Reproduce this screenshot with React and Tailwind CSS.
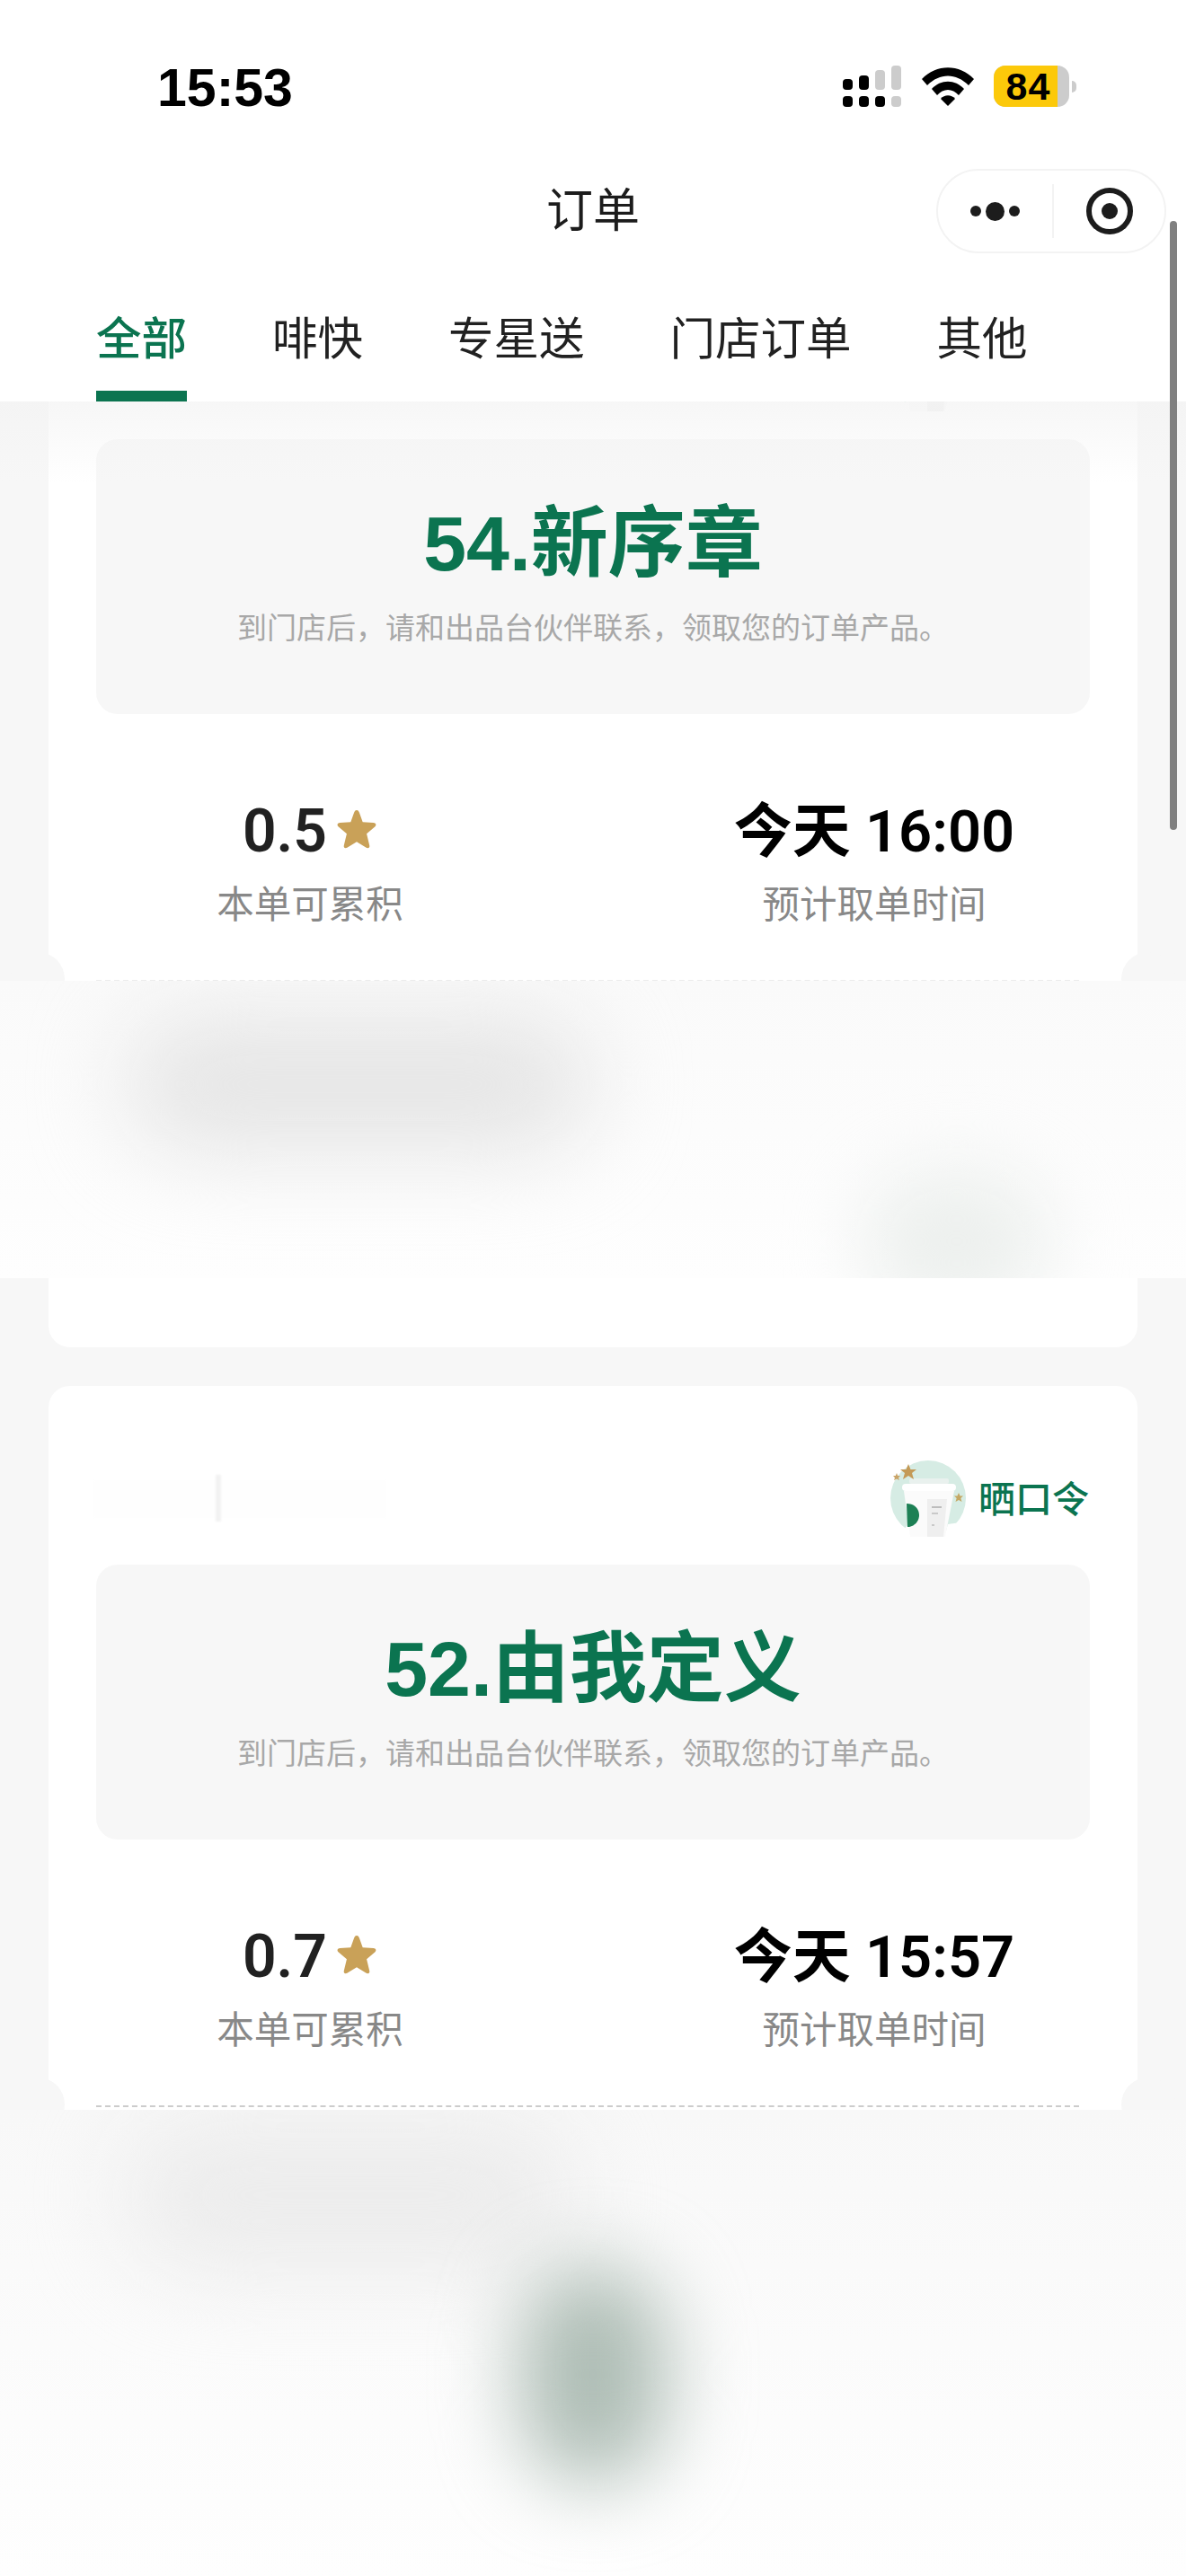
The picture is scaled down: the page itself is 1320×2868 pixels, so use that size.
const tabs = ['全部', '啡快', '专星送', '门店订单', '其他']
const cjk = "font-['Liberation_Sans','Noto_Sans_CJK_SC',sans-serif]"
const num = "font-['Roboto','Noto_Sans_CJK_SC',sans-serif]"
const pickupHint = '到门店后\uFF0C请和出品台伙伴联系\uFF0C领取您的订单产品。'

function StatusBar() {
  return (
    <div className="flex h-[188px] items-start pl-[175px] pt-[68px]">
      <span className="font-['Liberation_Sans',sans-serif] text-[59px] leading-[60px] font-bold text-black">15:53</span>
      <div className="ml-auto flex items-start pr-[122px] pt-[5px]">
        <svg width="66" height="46" viewBox="0 0 66 46" className="mr-[22px]">
          <rect x="0" y="15" width="11" height="12" rx="4" fill="#000" />
          <rect x="18" y="11" width="11" height="16" rx="4" fill="#000" />
          <rect x="36" y="5" width="11" height="22" rx="4" fill="#ccc" />
          <rect x="54" y="0" width="11" height="27" rx="4" fill="#ccc" />
          <rect x="0" y="34" width="11" height="12" rx="4" fill="#000" />
          <rect x="18" y="34" width="11" height="12" rx="4" fill="#000" />
          <rect x="36" y="34" width="11" height="12" rx="4" fill="#000" />
          <rect x="54" y="34" width="11" height="12" rx="4" fill="#ccc" />
        </svg>
        <svg width="58" height="44" viewBox="0 0 58 44" className="mr-[22px] mt-[2px]">
          <path d="M0 13 C16 -4 42 -4 58 13 L52 20 C38 6 20 6 6 20 Z" fill="#000" />
          <path d="M11 24 C21 13 37 13 47 24 L41 31 C34 23 24 23 17 31 Z" fill="#000" />
          <path d="M21 35 C25 30 33 30 37 35 L29 43 Z" fill="#000" />
        </svg>
        <div className="relative flex h-[46px] w-[84px] overflow-hidden rounded-[13px] bg-[#cccccc]">
          <div className="flex w-[71px] items-center justify-center bg-[#fcc90a] pl-[6px] font-['Liberation_Sans',sans-serif] text-[43px] leading-[46px] font-bold tracking-[1px] text-black">84</div>
        </div>
        <div className="ml-[3px] mt-[17px] h-[13px] w-[5px] rounded-r-full bg-[#cccccc]" />
      </div>
    </div>
  )
}

function NavBar() {
  return (
    <div className="relative flex h-[94px] items-center justify-center">
      <span className={`${cjk} text-[52px] leading-[60px] text-[#1c1c1c]`}>订单</span>
      <div className="absolute right-[22px] top-0 flex h-[94px] w-[256px] items-center rounded-full border-2 border-[#f3f3f3] bg-white">
        <div className="flex w-[127px] items-center justify-center gap-[5px]">
          <span className="h-[12px] w-[12px] rounded-full bg-[#1c1c1c]" />
          <span className="h-[21px] w-[21px] rounded-full bg-[#1c1c1c]" />
          <span className="h-[12px] w-[12px] rounded-full bg-[#1c1c1c]" />
        </div>
        <div className="h-[60px] w-[2px] bg-[#f3f3f3]" />
        <div className="flex flex-1 items-center justify-center">
          <div className="flex h-[52px] w-[52px] items-center justify-center rounded-full border-[6px] border-[#1c1c1c]">
            <span className="h-[18px] w-[18px] rounded-full bg-[#1c1c1c]" />
          </div>
        </div>
      </div>
    </div>
  )
}

function Tabs() {
  return (
    <div className="flex h-[165px] gap-[95px] pl-[107px] pt-[66px]">
      {tabs.map((tab, i) => (
        <div key={tab} className="relative">
          <span className={`${cjk} block text-[50.5px] leading-[60px] whitespace-nowrap ${i === 0 ? 'font-medium text-[#0b7450]' : 'text-[#212121]'}`}>{tab}</span>
          {i === 0 && <div className="absolute left-0 top-[87px] h-[12px] w-[101px] bg-[#0b7450]" />}
        </div>
      ))}
    </div>
  )
}

function CupBadge() {
  return (
    <svg width="90" height="90" viewBox="0 0 90 90">
      <circle cx="42" cy="43" r="42" fill="#d6ece4" />
      <path d="M12 86 H76 V90 H12 Z" fill="#fff" />
      <path d="M20 72 L24 86 H8 Z" fill="#fff" />
      <path d="M64 72 L60 86 H78 V70 Z" fill="#fff" />
      <path d="M15 35 H71 L61 86 H22 Z" fill="#fbfbfb" />
      <rect x="13" y="27" width="60" height="8" rx="4" fill="#ffffff" />
      <rect x="21" y="21" width="44" height="6" rx="2" fill="#e9f1ee" />
      <path d="M41 44 H63 L59 86 H41 Z" fill="#efefef" />
      <rect x="46" y="52" width="11" height="2" fill="#bdbdbd" />
      <rect x="46" y="59" width="7" height="2" fill="#c9c9c9" />
      <rect x="46" y="72" width="3" height="2" fill="#c9c9c9" />
      <path d="M18 49 C28 49 32 56 32 62 C32 69 26 75 19 75 Z" fill="#1d8055" />
      <path d="M20 5 L22.5 11 L29 11 L24 15 L26 22 L20 18 L14 22 L16 15 L11 11 L17.5 11 Z" fill="#c49a57" />
      <path d="M7 15 L8.2 18 L11 18 L9 20.2 L10 23 L7 21.5 L4 23 L5 20.2 L3 18 L5.8 18 Z" fill="#c9a468" />
      <path d="M76 37 L77.5 40.5 L81 40.5 L78.3 43 L79.5 47 L76 45 L72.5 47 L73.7 43 L71 40.5 L74.5 40.5 Z" fill="#c4a864" />
    </svg>
  )
}

function Star() {
  return (
    <svg width="46" height="46" viewBox="0 0 44 44" className="ml-[10px] -mt-[4px]">
      <path
        d="M22 1 C23.6 1 24.2 2.2 24.8 3.6 L28.4 13.6 L39.8 14.4 C42.6 14.6 43.2 17 41.6 18.4 L32.6 26 L35.6 38.6 C36.2 41 34.2 42.2 32.2 41 L22 34.6 L11.8 41 C9.8 42.2 7.8 41 8.4 38.6 L11.4 26 L2.4 18.4 C0.8 17 1.4 14.6 4.2 14.4 L15.6 13.6 L19.2 3.6 C19.8 2.2 20.4 1 22 1 Z"
        fill="#c9a158"
      />
    </svg>
  )
}

function Card({ code, points, time, dashClass }) {
  return (
    <div className="h-[1210px] shrink-0 rounded-[24px] bg-white px-[53px]">
      <div className="flex h-[199px] justify-end pt-[82px]">
        <div className="flex h-[90px] items-center pr-[1px]">
          <CupBadge />
          <span className={`${cjk} ml-[8px] text-[41px] leading-[50px] font-medium text-[#0b7450]`}>晒口令</span>
        </div>
      </div>
      <div className="flex h-[306px] flex-col items-center rounded-[24px] bg-[#f7f7f7] pt-[66px]">
        <div className={`${cjk} text-[86px] leading-[100px] font-bold text-[#0b7450]`}>{code}</div>
        <div className={`${cjk} mt-[22px] text-[33px] leading-[46px] text-[#a8a8a8]`}>{pickupHint}</div>
      </div>
      <div className="mt-[96px] flex justify-between">
        <div className="flex w-[476px] flex-col items-center">
          <div className="flex h-[70px] items-center">
            <span className={`${num} text-[66px] leading-[70px] font-semibold text-[#212121]`}>{points}</span>
            <Star />
          </div>
          <div className={`${cjk} mt-[24px] text-[41.5px] leading-[46px] text-[#888888]`}>本单可累积</div>
        </div>
        <div className="flex w-[480px] flex-col items-center">
          <div className={`${num} h-[70px] text-[65px] leading-[70px] font-semibold whitespace-nowrap text-black`}>今天 {time}</div>
          <div className={`${cjk} mt-[24px] text-[41.5px] leading-[46px] text-[#888888]`}>预计取单时间</div>
        </div>
      </div>
      <div className={`mr-[12px] mt-[60px] border-t-2 border-dashed ${dashClass}`} />
    </div>
  )
}

export default function App() {
  return (
    <div className="relative h-[2868px] w-[1320px] overflow-hidden bg-[#f7f7f7]">
      <div className="relative z-10 bg-white">
        <StatusBar />
        <NavBar />
        <Tabs />
      </div>

      <div className="-mt-[157px] flex flex-col gap-[43px] px-[54px]">
        <Card code="54.新序章" points="0.5" time="16:00" dashClass="border-[#ececec]" />
        <Card code="52.由我定义" points="0.7" time="15:57" dashClass="border-[#cccccc]" />
      </div>

      {/* soft shade under the tab bar */}
      <div className="absolute left-0 right-0 top-[447px] h-[90px] bg-gradient-to-b from-[#f3f3f3]/70 to-transparent" />

      {/* ticket notches */}
      <div className="absolute left-[12px] top-[1060px] h-[60px] w-[60px] rounded-full bg-[#f7f7f7]" />
      <div className="absolute left-[1248px] top-[1060px] h-[60px] w-[60px] rounded-full bg-[#f7f7f7]" />
      <div className="absolute left-[12px] top-[2313px] h-[60px] w-[60px] rounded-full bg-[#f7f7f7]" />
      <div className="absolute left-[1248px] top-[2313px] h-[60px] w-[60px] rounded-full bg-[#f7f7f7]" />

      {/* faded store name on the second card */}
      <div className="absolute left-[104px] top-[1648px] h-[42px] w-[326px] bg-[#fefefe] blur-[1px]" />
      <div className="absolute left-[240px] top-[1642px] h-[52px] w-[6px] bg-[#f2f2f2] blur-[1px]" />

      {/* blurred details of the first order */}
      <div className="absolute left-0 right-0 top-[1092px] h-[331px] overflow-hidden bg-gradient-to-b from-[#fafafa] to-[#fefefe]">
        <div className="absolute left-[140px] top-[40px] h-[150px] w-[520px] rounded-full bg-[#e5e5e5] blur-[50px]" />
        <div className="absolute left-[960px] top-[210px] h-[160px] w-[210px] rounded-full bg-[#edf0ee] blur-[40px]" />
      </div>

      {/* blurred details of the second order */}
      <div className="absolute left-0 right-0 top-[2349px] bottom-0 overflow-hidden bg-gradient-to-b from-[#f8f8f8] via-[#fbfbfb] to-[#fefefe]">
        <div className="absolute left-[140px] top-[10px] h-[170px] w-[500px] rounded-full bg-[#ececec] blur-[50px]" />
        <div className="absolute left-[580px] top-[175px] h-[240px] w-[160px] rounded-full bg-[#adbcb4] blur-[44px]" />
      </div>

      {/* scroll indicator */}
      <div className="absolute left-[1302px] top-[246px] z-20 h-[678px] w-[8px] rounded-full bg-[#808080]" />
    </div>
  )
}
